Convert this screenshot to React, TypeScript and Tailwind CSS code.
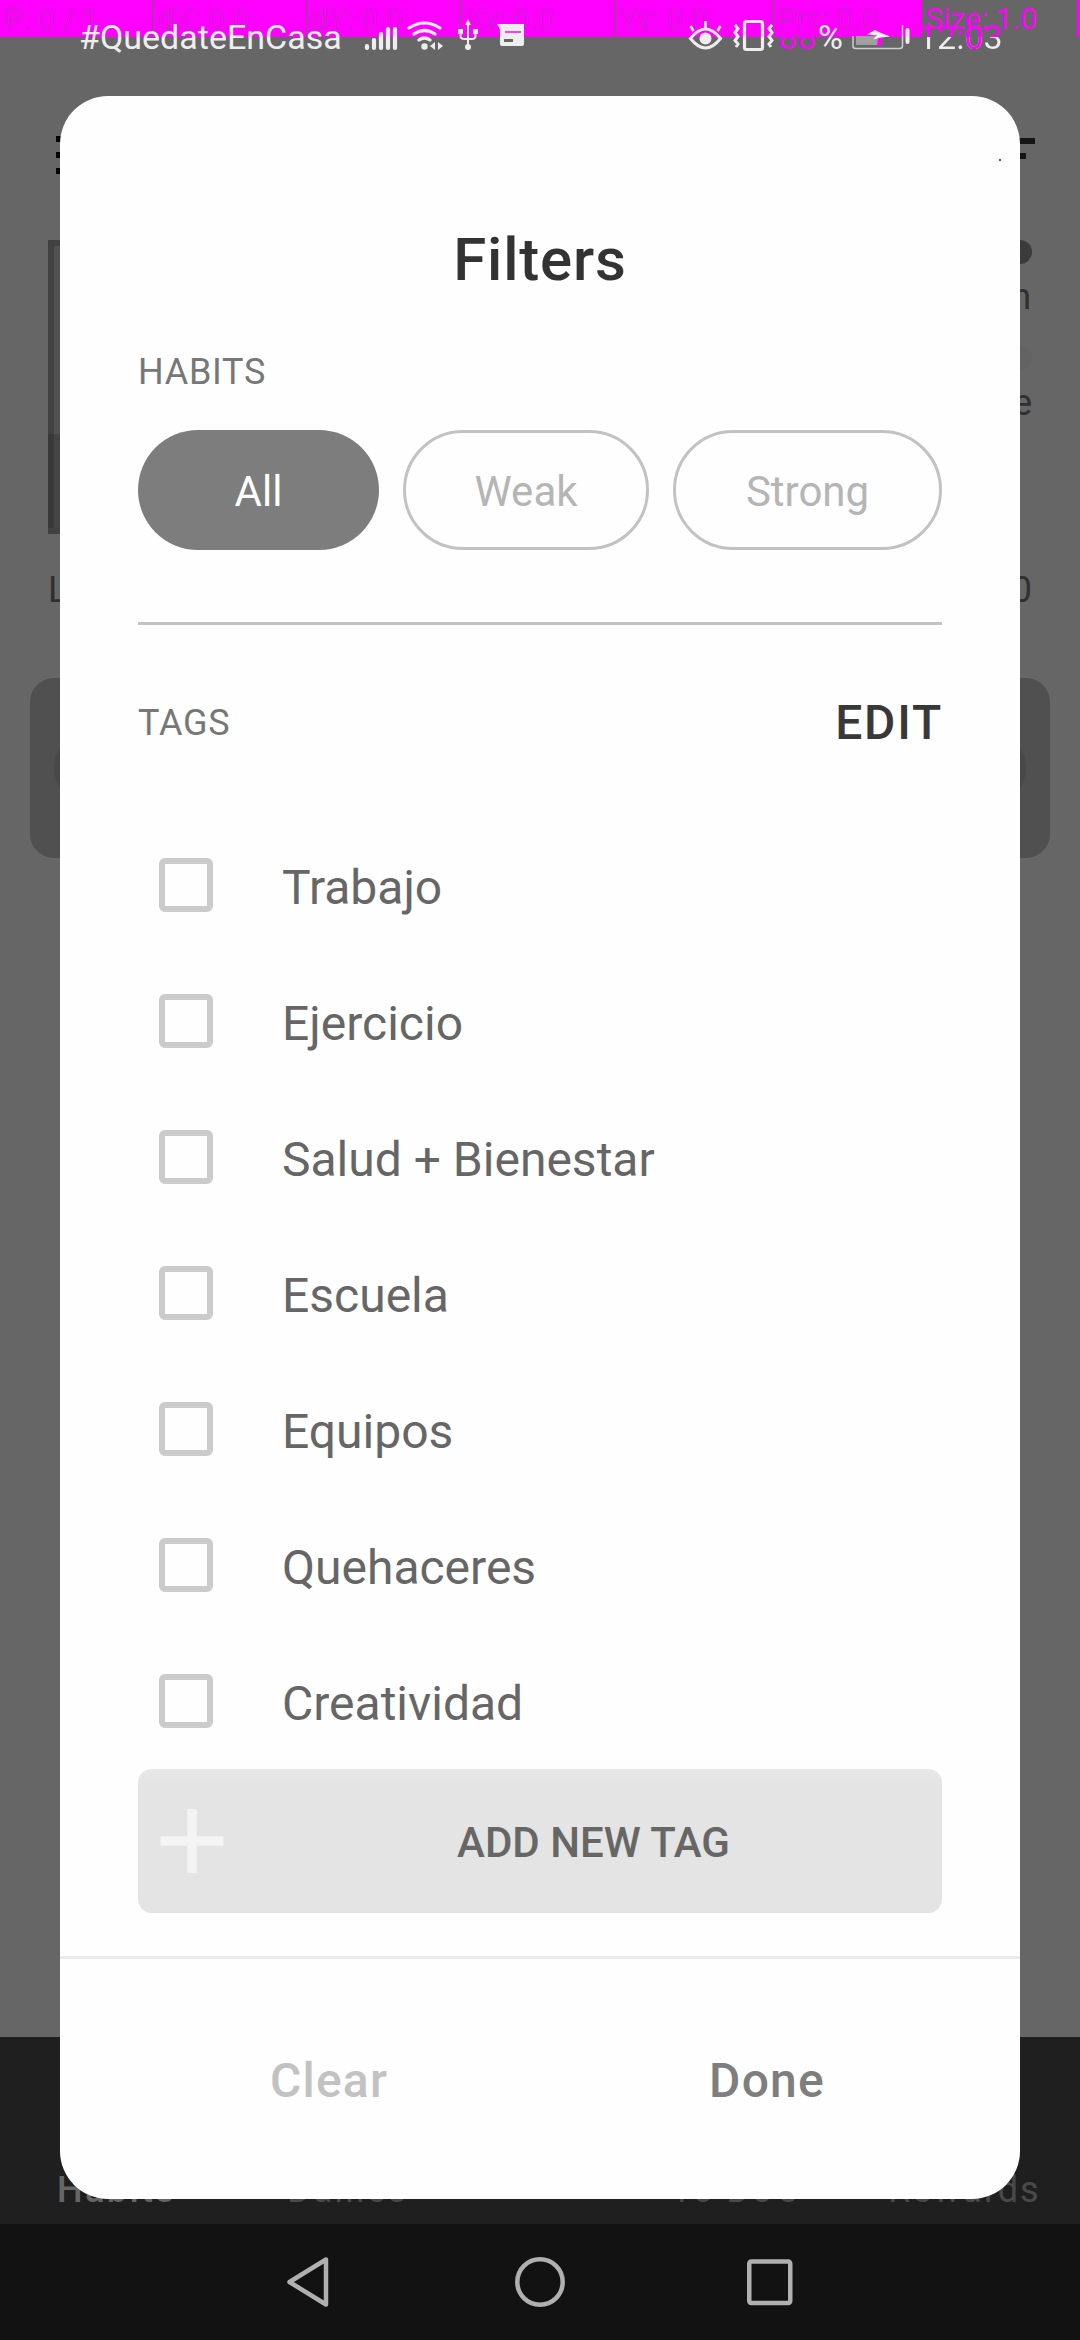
const tags = ["Trabajo", "Ejercicio", "Salud + Bienestar", "Escuela", "Equipos", "Quehaceres", "Creatividad"];

const debugCells = [
  { label: "P: 0 / 1", width: "w-[153px]" },
  { label: "dX: 0.0", width: "w-[154px]" },
  { label: "dY: 0.0", width: "w-[154px]" },
  { label: "Xv: 0.0", width: "w-[154px]" },
  { label: "Yv: 0.0", width: "w-[158px]" },
  { label: "Prs: 0.0", width: "w-[150px]" },
];

function PointerOverlay() {
  return (
    <div className="absolute inset-x-0 top-0 flex h-[37px] text-[30px] leading-[37px]">
      {debugCells.map((c) => (
        <div
          key={c.label}
          className={`${c.width} shrink-0 overflow-hidden whitespace-nowrap border-r border-[#666] bg-[#ff00ff] pl-1 text-transparent [-webkit-text-stroke:0.35px_#8a4d8a]`}
        >
          {c.label}
        </div>
      ))}
      <div className="flex-1" />
      <div className="w-[3px] bg-[#ff00ff]" />
    </div>
  );
}

function StatusIcons() {
  return (
    <svg className="ml-[23px] h-[40px] w-[164px]" viewBox="363 18 164 40" fill="none" stroke="#eee">
      <g strokeWidth="4.2" strokeLinecap="round">
        <path d="M367 47v2M374 41v8M381 35v14M388 30v19M395 30v19" />
      </g>
      <g strokeWidth="3.2" strokeLinecap="round">
        <path d="M409 29q15.500-10 31 0M414 35q10.500-7 21 0M419 41q5.500-4 11 0" />
      </g>
      <circle cx="424.500" cy="47.500" r="3.200" fill="#eee" stroke="none" />
      <path d="M435 43v8l-5-4zM438 43l5 4-5 4z" fill="#eee" stroke="none" />
      <path d="M468 26v22M460.500 33v4q0 3 4 3h7q4 0 4-3v-4" strokeWidth="2" />
      <path d="M458 30h5v5h-5zM473 30h5v5h-5zM468 20l3 6h-6zM465 48a3 3 0 1 0 6 0a3 3 0 1 0-6 0" fill="#eee" stroke="none" />
      <path d="M497 25h27v20q0 2-2 2h-20q-2 0-2-2V30z" fill="#eee" stroke="none" />
      <path d="M505 33h16" stroke="#ff00ff" strokeWidth="1.500" />
      <path d="M504 41.500h9" stroke="#666" strokeWidth="3" />
    </svg>
  );
}

function EyeVibrateIcons() {
  return (
    <svg className="h-[40px] w-[88px]" viewBox="688 18 88 40" fill="none" stroke="#eee">
      <path d="M691.500 39.500q15-19 30 0q-15 19-30 0z" strokeWidth="3" />
      <circle cx="706.500" cy="39.500" r="6" fill="#eee" stroke="none" />
      <path d="M706.500 22v7M691.500 27l3 5M721.500 27l-3 5" strokeWidth="2.600" />
      <rect x="745.500" y="22.500" width="18" height="28" rx="2" strokeWidth="3.200" />
      <path d="M736 26l3 3.500-3 4 3 4-3 4 3 3.500-2 3M773 26l-3 3.500 3 4-3 4 3 4-3 3.500 2 3" strokeWidth="3" />
    </svg>
  );
}

function Battery() {
  return (
    <svg className="ml-[9px] h-[40px] w-[60px]" viewBox="851 18 60 40" fill="none">
      <path d="M853 37v10q0 2.500 2.500 2.500h44q3 0 3-2.500V26" stroke="#cfcfcf" strokeWidth="1.500" />
      <path d="M856 37h22v9h-22z" fill="#a0a0a0" />
      <path d="M878 37h5l-2 10h-4z" fill="#f0f" />
      <path d="M875 31l-8 4.500 10 1-4 4 8-2 9-1-9-3.500z" fill="#f4f4f4" />
      <path d="M907.500 31v12" stroke="#eee" strokeWidth="4" strokeLinecap="round" />
    </svg>
  );
}

function StatusBar() {
  return (
    <div className="relative h-[96px]">
      <PointerOverlay />
      <div className="relative flex h-[74px] items-center pl-[79px] text-[34px] leading-[40px] text-[#eee]">
        <span className="w-[261px] whitespace-nowrap">#QuedateEnCasa</span>
        <StatusIcons />
        <div className="flex-1" />
        <EyeVibrateIcons />
        <span className="ml-[3px] w-[40px] text-[#ff00ff]">88</span>
        <span className="w-[24px]">%</span>
        <Battery />
        <span className="mr-[79px] ml-[7px] w-[83px] bg-gradient-to-b from-[#ff00ff] from-50% to-[#eee] to-50% bg-clip-text whitespace-nowrap text-transparent">
          12:<span className="text-[#ff00ff]">0</span>3
        </span>
      </div>
      <span className="absolute top-0 left-[925px] text-[30px] leading-[37px] text-[#ff00ff]">Size: 1.0</span>
    </div>
  );
}

function HabitsPage() {
  return (
    <div className="flex h-[1941px] flex-col text-[36px] leading-[42px] text-[#303030]">
      <div className="flex h-[144px] items-start justify-between pt-[40px] pr-[45px] pl-[56px]">
        <div className="flex w-[54px] flex-col gap-[10px]">
          <i className="h-[6px] bg-black" />
          <i className="h-[6px] bg-black" />
          <i className="h-[6px] bg-black" />
        </div>
        <div className="mt-[2px] flex w-[54px] flex-col items-center gap-[9px]">
          <i className="h-[6px] w-full bg-[#151515]" />
          <i className="h-[6px] w-[36px] bg-[#151515]" />
        </div>
      </div>
      <div className="flex h-[294px] justify-between pr-[48px] pl-[48px]">
        <div className="flex w-[300px] flex-col border-[6px] border-[#414141] bg-[#525252]">
          <div className="h-[188px]" />
          <div className="-ml-[6px] flex-1 border-l-[6px] border-[#393939] bg-[#454545]" />
        </div>
        <div className="flex w-[240px] flex-col items-end">
          <div className="h-[24px] w-full rounded-full bg-[#3b3b3b]" />
          <span className="mt-[12px] mr-px leading-[42px]">Health</span>
          <div className="mt-[28px] h-[24px] w-full rounded-full bg-[#636363]" />
          <span className="mt-[12px] leading-[42px]">Experience</span>
        </div>
      </div>
      <div className="mt-[35px] flex justify-between pr-[48px] pl-[48px]">
        <span>Level 1</span>
        <span>0</span>
      </div>
      <div className="mx-[30px] mt-[67px] flex h-[180px] items-center justify-between rounded-[24px] bg-[#505050] px-[24px]">
        <div className="size-[76px] rounded-full bg-[#484848]" />
        <div className="size-[76px] rounded-full bg-[#484848]" />
      </div>
    </div>
  );
}

function TabBar() {
  return (
    <div className="flex h-[187px] items-end bg-[#1f1f1f] pb-[13px] text-[36px] leading-[42px] tracking-[2px] whitespace-nowrap text-[#4a4a4a]">
      <span className="ml-[57px] w-[230px] font-medium tracking-[2.4px] text-[#666]">Habits</span>
      <span className="w-[384px]">Dailies</span>
      <span className="w-[217px]">To Do's</span>
      <span>Rewards</span>
    </div>
  );
}

function NavBar() {
  return (
    <div className="flex h-[116px] items-center justify-center gap-[180px] bg-[#121212]">
      <svg className="size-[50px]" viewBox="0 0 50 50" fill="none" stroke="#b0b0b0" strokeWidth="4.500" strokeLinejoin="round">
        <path d="M4.500 25L41 2.500v45z" />
      </svg>
      <svg className="size-[50px]" viewBox="0 0 50 50" fill="none" stroke="#b0b0b0" strokeWidth="4.500">
        <circle cx="25" cy="25" r="22.700" />
      </svg>
      <svg className="size-[50px]" viewBox="0 0 50 50" fill="none" stroke="#b0b0b0" strokeWidth="4.500">
        <rect x="4.250" y="4.500" width="41" height="41.500" rx="2" />
      </svg>
    </div>
  );
}

function FiltersDialog() {
  return (
    <div className="absolute top-[96px] left-[60px] h-[2103px] w-[960px] overflow-hidden rounded-[48px] bg-[#fefefe] pt-[124px]">
      <div className="px-[78px]">
        <h1 className="text-center text-[60px] leading-[80px] font-medium tracking-[0.8px] text-[#333]">Filters</h1>
        <div className="mt-[48px] text-[36px] leading-[48px] tracking-[0.7px] text-[#777]">HABITS</div>
        <div className="mt-[34px] flex justify-between text-[42px] leading-[60px]">
          <button className="h-[120px] w-[241px] rounded-full bg-[#7d7d7d] pt-[3px] text-white">All</button>
          <button className="flex h-[120px] w-[246px] items-center justify-center rounded-full border-[3px] border-[#c2c2c2] pt-[3px] text-[#b5b5b5]">
            Weak
          </button>
          <button className="flex h-[120px] w-[269px] items-center justify-center rounded-full border-[3px] border-[#c2c2c2] pt-[3px] text-[#b5b5b5]">
            Strong
          </button>
        </div>
        <div className="mt-[72px] h-[3px] bg-[#c2c2c2]" />
        <div className="mt-[68px] flex h-[60px] items-center justify-between">
          <span className="text-[36px] tracking-[0.8px] text-[#777]">TAGS</span>
          <span className="-mr-[1px] text-[48px] leading-[60px] font-medium tracking-[1.8px] text-[#383838]">EDIT</span>
        </div>
        <ul className="mt-[64px]">
          {tags.map((t) => (
            <li key={t} className="flex h-[136px] items-center pl-[21px]">
              <span className="size-[54px] rounded-[6px] border-[6px] border-[#cbcbcb]" />
              <span className="ml-[69px] pt-[5px] text-[48px] leading-[60px] text-[#666]">{t}</span>
            </li>
          ))}
        </ul>
        <div className="flex h-[144px] items-center rounded-[14px] bg-gradient-to-b from-[#e8e8e8] to-[#e4e4e4] to-10% pl-[22px]">
          <svg className="size-[64px] shrink-0" viewBox="0 0 64 64" stroke="#f4f4f4" strokeWidth="9.500">
            <path d="M0.500 32h63M32 0v64" />
          </svg>
          <span className="ml-[53px] flex-1 pt-[4px] pr-[32px] text-center text-[42px] leading-[60px] font-medium text-[#666]">
            ADD NEW TAG
          </span>
        </div>
      </div>
      <div className="mt-[43px] h-[3px] bg-[#ebebeb]" />
      <div className="grid h-[240px] grid-cols-2 items-center pt-[3px] pr-[34px] pl-[50px] text-center text-[48px] font-medium tracking-[1.2px]">
        <span className="text-[#c2c2c2]">Clear</span>
        <span className="text-[#7e7e7e]">Done</span>
      </div>
      <i className="absolute top-[63px] left-[939px] size-[2px] bg-[#ff00ff]" />
    </div>
  );
}

export default function App() {
  return (
    <div className="relative h-[2340px] w-[1080px] overflow-hidden bg-[#666] font-['Roboto',sans-serif]">
      <StatusBar />
      <HabitsPage />
      <TabBar />
      <NavBar />
      <FiltersDialog />
    </div>
  );
}
